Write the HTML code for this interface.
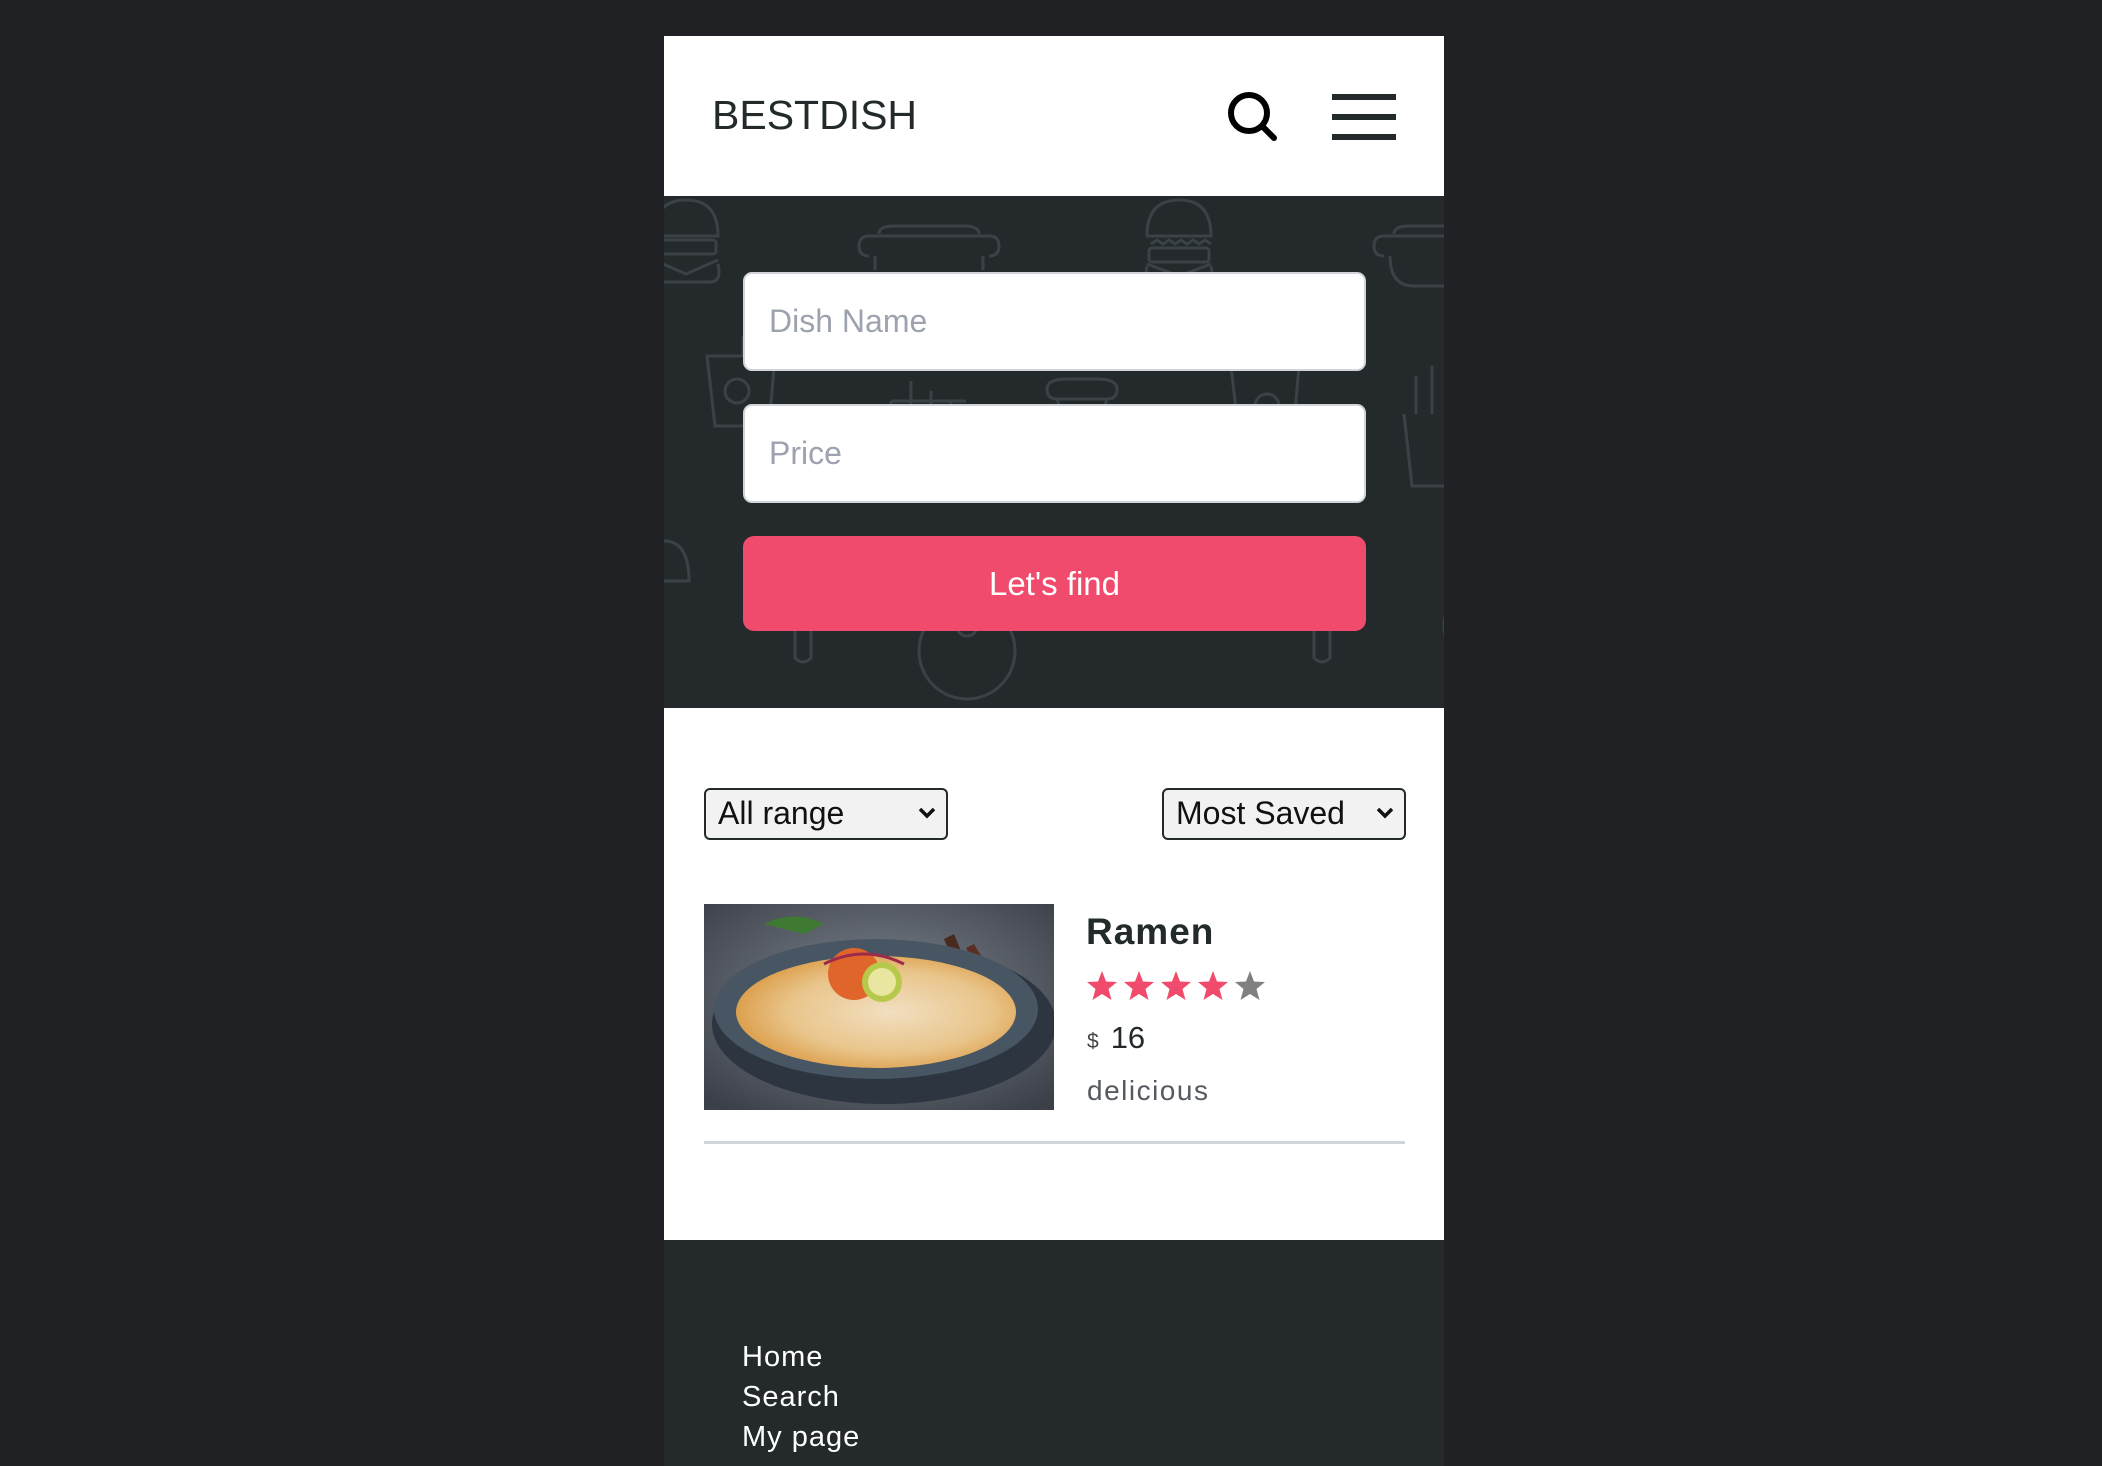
<!DOCTYPE html>
<html><head><meta charset="utf-8"><style>
*{margin:0;padding:0;box-sizing:border-box}
body{width:2102px;height:1466px;background:#202124;font-family:"Liberation Sans",sans-serif;overflow:hidden;position:relative}
.panel{position:absolute;left:664px;top:36px;width:780px;height:1430px;background:#fff;overflow:hidden}
.abs{position:absolute}
.header{left:0;top:0;width:780px;height:160px;background:#fff}
.logo{left:48px;top:56px;font-size:41px;color:#232a2b;letter-spacing:0}
.hero{left:0;top:160px;width:780px;height:512px;background:#242a2b}
.inp{position:absolute;left:79px;width:623px;height:99px;background:#fff;border:2px solid #d1d5db;border-radius:9px;font-size:32px;color:#9ca3af;padding-left:24px;line-height:95px}
.btn{position:absolute;left:79px;top:340px;width:623px;height:95px;background:#f04b6c;border-radius:11px;color:#fff;font-size:33px;text-align:center;line-height:95px}
.sel{position:absolute;top:752px;width:244px;height:52px;border:2px solid #232a2b;border-radius:6px;background:#f2f2f2;font-size:32px;color:#111;padding-left:12px;line-height:46px}
.sel svg{position:absolute;right:10px;top:16px}
.footer{left:0;top:1204px;width:780px;height:230px;background:#242a2b}
.fl{position:absolute;left:78px;color:#fff;font-size:29px;font-weight:300;letter-spacing:1px}
</style></head><body>
<div class="panel">
 <div class="abs header">
  <div class="abs logo">BESTDISH</div>
  <svg class="abs" style="left:556px;top:50px" width="70" height="70" viewBox="0 0 70 70"><circle cx="29" cy="27" r="18" fill="none" stroke="#000" stroke-width="6"/><line x1="42" y1="40" x2="54" y2="52" stroke="#000" stroke-width="6" stroke-linecap="round"/></svg>
  <div class="abs" style="left:668px;top:58px;width:64px;height:6px;background:#232a2b"></div>
  <div class="abs" style="left:668px;top:78px;width:64px;height:6px;background:#232a2b"></div>
  <div class="abs" style="left:668px;top:98px;width:64px;height:6px;background:#232a2b"></div>
 </div>
 <div class="abs hero">
  <svg class="abs" style="left:0;top:0" width="780" height="512" fill="none" stroke="#3b4246" stroke-width="3">
   <g transform="translate(-40,0)"><path d="M30 40 Q30 4 62 4 Q94 4 94 40 Z"/><rect x="32" y="44" width="60" height="14" rx="3"/><path d="M30 64 L62 78 L94 64"/><path d="M30 68 Q26 86 40 86 L86 86 Q98 86 94 68"/></g>
   <g transform="translate(453,0)"><path d="M30 40 Q30 4 62 4 Q94 4 94 40 Z"/><path d="M34 48 l6 -4 6 4 6 -4 6 4 6 -4 6 4 6 -4 6 4 6 -4 6 4"/><rect x="32" y="52" width="60" height="14" rx="3"/><path d="M30 68 L62 80 L94 68"/><path d="M30 70 Q26 88 40 88 L86 88 Q98 88 94 70"/></g>
   <g transform="translate(195,30)"><path d="M20 8 Q20 0 35 0 L105 0 Q120 0 120 8 M10 30 Q0 30 0 20 Q0 10 10 10 L130 10 Q140 10 140 20 Q140 30 130 30"/><path d="M16 30 L16 44 M124 30 L124 44"/></g>
   <g transform="translate(710,30)"><path d="M20 8 Q20 0 35 0 L105 0 M10 30 Q0 30 0 20 Q0 10 10 10 L130 10 M16 30 Q16 60 40 60 L90 60"/></g>
   <g transform="translate(43,140)"><path d="M0 20 L68 20 L62 90 L8 90 Z M36 20 L36 0"/><circle cx="30" cy="55" r="12"/></g>
   <g transform="translate(567,150)"><path d="M0 20 L68 20 L62 90 L8 90 Z"/><circle cx="36" cy="60" r="12"/></g>
   <g transform="translate(227,185)"><path d="M0 20 L0 30 M20 0 L20 30 M40 10 L40 30 M60 20 L60 30 M0 20 L75 20"/></g>
   <g transform="translate(740,170)"><path d="M0 48 L8 120 L40 120 M12 10 L12 48 M28 0 L28 48"/></g>
   <g transform="translate(383,183)"><path d="M0 10 Q0 0 20 0 L50 0 Q70 0 70 10 Q70 20 60 20 L10 20 Q0 20 0 10 Z M10 20 L16 40 L54 40 L60 20"/></g>
   <g transform="translate(-20,345)"><path d="M20 0 Q45 0 45 40 L0 40"/><circle cx="8" cy="18" r="2"/></g>
   <circle cx="303" cy="455" r="48"/><circle cx="303" cy="430" r="10"/>
   <path d="M131 435 L131 462 Q139 470 147 462 L147 435"/>
   <path d="M650 435 L650 462 Q658 470 666 462 L666 435"/>
   <circle cx="820" cy="430" r="40"/>
  </svg>
  <div class="inp" style="top:76px">Dish Name</div>
  <div class="inp" style="top:208px">Price</div>
  <div class="btn">Let's find</div>
 </div>
 <div class="sel" style="left:40px">All range<svg width="18" height="14" viewBox="0 0 18 14"><path d="M2 3 L9 10 L16 3" fill="none" stroke="#111" stroke-width="3.5"/></svg></div>
 <div class="sel" style="left:498px">Most Saved<svg width="18" height="14" viewBox="0 0 18 14"><path d="M2 3 L9 10 L16 3" fill="none" stroke="#111" stroke-width="3.5"/></svg></div>
 <svg class="abs" style="left:40px;top:868px" width="350" height="206" viewBox="0 0 350 206">
  <defs><radialGradient id="bg" cx="50%" cy="45%" r="70%"><stop offset="0" stop-color="#7f8590"/><stop offset="1" stop-color="#3b4048"/></radialGradient>
  <radialGradient id="soup" cx="55%" cy="50%" r="60%"><stop offset="0" stop-color="#f1dfc0"/><stop offset="0.6" stop-color="#e9c58b"/><stop offset="1" stop-color="#d9963e"/></radialGradient></defs>
  <rect width="350" height="206" fill="url(#bg)"/>
  <path d="M250 30 L300 150 L290 155 L240 35 Z" fill="#4a2a1f"/>
  <path d="M270 40 L330 140 L320 146 L262 44 Z" fill="#5a2e20"/>
  <ellipse cx="180" cy="120" rx="172" ry="80" fill="#2c3540"/>
  <ellipse cx="172" cy="105" rx="162" ry="70" fill="#485664"/>
  <ellipse cx="172" cy="108" rx="140" ry="56" fill="url(#soup)"/>
  <path d="M60 20 Q90 5 120 20 L100 30 Z" fill="#3f7a32"/>
  <circle cx="150" cy="70" r="26" fill="#e0652a"/>
  <circle cx="178" cy="78" r="20" fill="#b7c94a"/>
  <circle cx="178" cy="78" r="14" fill="#e8e6a0"/>
  <path d="M120 60 Q160 40 200 60" stroke="#9c2a4a" stroke-width="3" fill="none"/>
 </svg>
 <div class="abs" style="left:422px;top:875px;font-size:37px;font-weight:bold;color:#232a2b;letter-spacing:1px">Ramen</div>
 <svg class="abs" style="left:422px;top:933px" width="190" height="36" viewBox="0 0 190 36">
  <g id="s"><path d="M16 2 L20 12.5 L31 13 L22.5 20 L25.5 31 L16 25 L6.5 31 L9.5 20 L1 13 L12 12.5 Z" fill="#f04b6c"/></g>
  <use href="#s" x="37"/><use href="#s" x="74"/><use href="#s" x="111"/>
  <path transform="translate(148,0)" d="M16 2 L20 12.5 L31 13 L22.5 20 L25.5 31 L16 25 L6.5 31 L9.5 20 L1 13 L12 12.5 Z" fill="#808080"/>
 </svg>
 <div class="abs" style="left:423px;top:984px;color:#232a2b"><span style="font-size:21px;color:#444">$</span><span style="font-size:31px;margin-left:12px">16</span></div>
 <div class="abs" style="left:423px;top:1039px;font-size:28px;color:#555a61;letter-spacing:1.5px">delicious</div>
 <div class="abs" style="left:40px;top:1105px;width:701px;height:3px;background:#d1d5db"></div>
 <div class="abs footer">
  <div class="fl" style="top:101px">Home</div>
  <div class="fl" style="top:141px">Search</div>
  <div class="fl" style="top:181px">My page</div>
 </div>
</div>
</body></html>
